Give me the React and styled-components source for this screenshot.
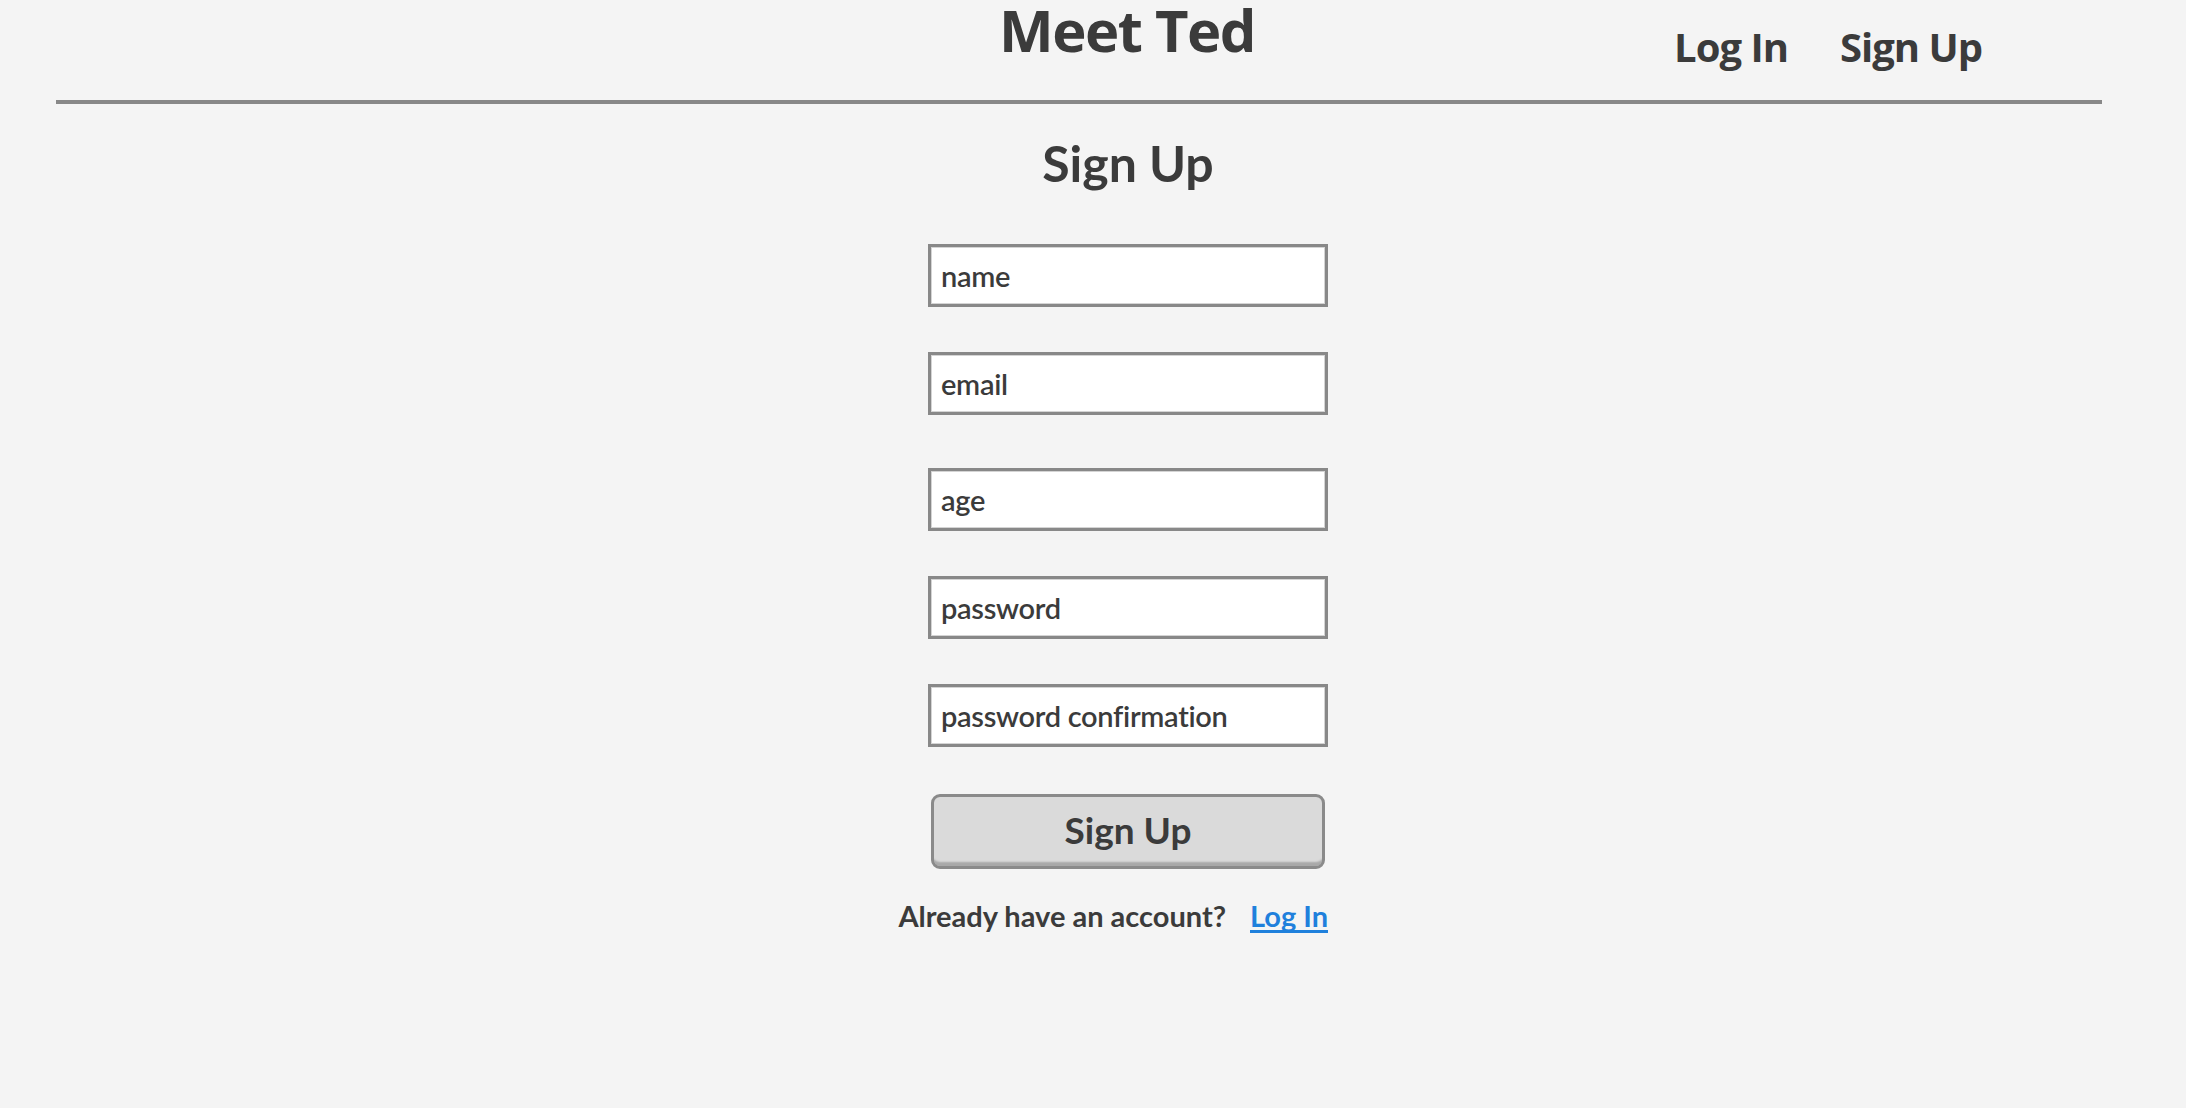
import React from "react";
import styled, { createGlobalStyle } from "styled-components";

const GlobalStyle = createGlobalStyle`
  body {
    margin: 0;
    background: #f4f4f4;
    color: #3b3b3b;
    font-family: "Lato", "Open Sans", sans-serif;
  }
`;

const Header = styled.header`
  display: grid;
  grid-template-columns: 1fr auto 1fr;
  align-items: start;
  height: 100px;
  margin: 0 84px 0 56px;
  padding-left: 96px;
  border-bottom: 4px solid #888888;
`;

const Title = styled.h1`
  grid-column: 2;
  margin: 0;
  font-family: "Open Sans", sans-serif;
  font-size: 58px;
  line-height: 60px;
  letter-spacing: -1.5px;
  font-weight: 700;
  color: #3b3b3b;
`;

const Nav = styled.nav`
  grid-column: 3;
  justify-self: end;
  display: flex;
  gap: 52px;
  margin: 26px 120px 0 0;
`;

const NavLink = styled.a`
  font-family: "Open Sans", sans-serif;
  font-size: 40px;
  line-height: 42px;
  letter-spacing: -1px;
  font-weight: 700;
  color: #3b3b3b;
  text-decoration: none;
  cursor: pointer;
`;

const Main = styled.main`
  display: flex;
  flex-direction: column;
  align-items: center;
  padding-left: 70px;
`;

const Heading = styled.h2`
  margin: 34px 0 56px;
  font-size: 50px;
  line-height: 50px;
  font-weight: 700;
`;

const Form = styled.form`
  display: flex;
  flex-direction: column;
  width: 400px;
`;

const Input = styled.input`
  box-sizing: border-box;
  width: 400px;
  height: 63px;
  margin-top: ${(p) => (p.$spaced ? "53px" : "45px")};
  padding: 0 10px;
  border: 3px solid #888888;
  box-shadow: inset 0 0 0 1px #d4d4d4;
  background: #ffffff;
  font-family: "Lato", sans-serif;
  font-size: 29px;
  font-weight: 600;
  letter-spacing: -0.3px;
  color: #3b3b3b;
  outline: none;

  &:first-child {
    margin-top: 0;
  }

  &::placeholder {
    color: #3b3b3b;
    opacity: 1;
  }
`;

const Button = styled.button`
  box-sizing: border-box;
  align-self: center;
  width: 394px;
  height: 75px;
  margin-top: 47px;
  border: 3px solid #8a8a8a;
  border-radius: 9px;
  background: #dadada;
  box-shadow: inset 0 -7px 2px -3px #a8a8a8;
  font-family: "Lato", sans-serif;
  font-size: 37px;
  font-weight: 700;
  color: #3b3b3b;
  padding: 0 0 4px;
  cursor: pointer;
`;

const Footer = styled.p`
  display: flex;
  align-items: flex-start;
  justify-content: flex-end;
  gap: 24px;
  width: 400px;
  margin: 32px 0 0;
  white-space: nowrap;
  font-size: 29px;
  line-height: 29px;
  font-weight: 700;
`;

const FooterLink = styled.a`
  display: inline-block;
  line-height: 29px;
  color: #1f80dc;
  border-bottom: 3px solid #1f80dc;
  text-decoration: none;
  cursor: pointer;
`;

const fields = [
  { name: "name" },
  { name: "email", type: "email" },
  { name: "age", spaced: true },
  { name: "password", type: "password" },
  { name: "password confirmation", type: "password" },
];

export default function App() {
  return (
    <>
      <GlobalStyle />
      <Header>
        <Title>Meet Ted</Title>
        <Nav>
          <NavLink>Log In</NavLink>
          <NavLink>Sign Up</NavLink>
        </Nav>
      </Header>
      <Main>
        <Heading>Sign Up</Heading>
        <Form onSubmit={(e) => e.preventDefault()}>
          {fields.map((f) => (
            <Input
              key={f.name}
              type={f.type || "text"}
              placeholder={f.name}
              $spaced={f.spaced}
            />
          ))}
          <Button type="submit">Sign Up</Button>
        </Form>
        <Footer>
          Already have an account?
          <FooterLink>Log In</FooterLink>
        </Footer>
      </Main>
    </>
  );
}
